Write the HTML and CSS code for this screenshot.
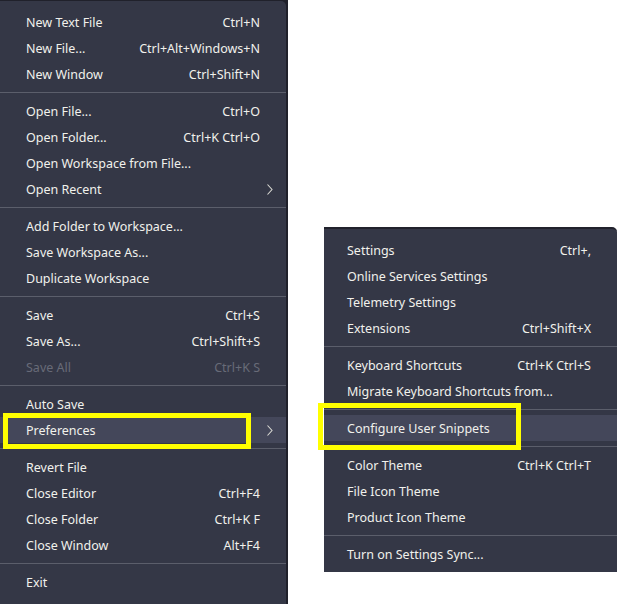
FILE: index.html
```html
<!DOCTYPE html>
<html>
<head>
<meta charset="utf-8">
<link rel="stylesheet" href="styles.css">
</head>
<body>
<div class="stage">
  <div class="left-col">
    <div class="menu menu-main">
      <div class="item"><span class="label">New Text File</span><span class="key">Ctrl+N</span></div>
      <div class="item"><span class="label">New File...</span><span class="key">Ctrl+Alt+Windows+N</span></div>
      <div class="item"><span class="label">New Window</span><span class="key">Ctrl+Shift+N</span></div>
      <div class="sep"></div>
      <div class="item"><span class="label">Open File...</span><span class="key">Ctrl+O</span></div>
      <div class="item"><span class="label">Open Folder...</span><span class="key">Ctrl+K Ctrl+O</span></div>
      <div class="item"><span class="label">Open Workspace from File...</span></div>
      <div class="item has-sub"><span class="label">Open Recent</span><svg class="chev" width="6" height="11" viewBox="0 0 6 11"><path d="M0.5 0.5 L5 5.5 L0.5 10.5" fill="none" stroke="#d8d8d2" stroke-width="1.1"/></svg></div>
      <div class="sep"></div>
      <div class="item"><span class="label">Add Folder to Workspace...</span></div>
      <div class="item"><span class="label">Save Workspace As...</span></div>
      <div class="item"><span class="label">Duplicate Workspace</span></div>
      <div class="sep"></div>
      <div class="item"><span class="label">Save</span><span class="key">Ctrl+S</span></div>
      <div class="item"><span class="label">Save As...</span><span class="key">Ctrl+Shift+S</span></div>
      <div class="item disabled"><span class="label">Save All</span><span class="key">Ctrl+K S</span></div>
      <div class="sep"></div>
      <div class="item"><span class="label">Auto Save</span></div>
      <div class="item has-sub active"><span class="label">Preferences</span><svg class="chev" width="6" height="11" viewBox="0 0 6 11"><path d="M0.5 0.5 L5 5.5 L0.5 10.5" fill="none" stroke="#d8d8d2" stroke-width="1.1"/></svg></div>
      <div class="sep"></div>
      <div class="item"><span class="label">Revert File</span></div>
      <div class="item"><span class="label">Close Editor</span><span class="key">Ctrl+F4</span></div>
      <div class="item"><span class="label">Close Folder</span><span class="key">Ctrl+K F</span></div>
      <div class="item"><span class="label">Close Window</span><span class="key">Alt+F4</span></div>
      <div class="sep"></div>
      <div class="item"><span class="label">Exit</span></div>
    </div>
    <div class="mark mark-left"></div>
  </div>

  <div class="right-col">
    <div class="menu menu-sub">
      <div class="item"><span class="label">Settings</span><span class="key">Ctrl+,</span></div>
      <div class="item"><span class="label">Online Services Settings</span></div>
      <div class="item"><span class="label">Telemetry Settings</span></div>
      <div class="item"><span class="label">Extensions</span><span class="key">Ctrl+Shift+X</span></div>
      <div class="sep"></div>
      <div class="item"><span class="label">Keyboard Shortcuts</span><span class="key">Ctrl+K Ctrl+S</span></div>
      <div class="item"><span class="label">Migrate Keyboard Shortcuts from...</span></div>
      <div class="sep"></div>
      <div class="item active"><span class="label">Configure User Snippets</span></div>
      <div class="sep"></div>
      <div class="item"><span class="label">Color Theme</span><span class="key">Ctrl+K Ctrl+T</span></div>
      <div class="item"><span class="label">File Icon Theme</span></div>
      <div class="item"><span class="label">Product Icon Theme</span></div>
      <div class="sep"></div>
      <div class="item"><span class="label">Turn on Settings Sync...</span></div>
    </div>
    <div class="mark mark-right"></div>
  </div>
</div>
</body>
</html>
```

FILE: styles.css
```css
html, body {
  margin: 0;
  padding: 0;
  background: #ffffff;
}
body {
  width: 618px;
  height: 604px;
  overflow: hidden;
  font-family: "Noto Sans", "Open Sans", sans-serif;
  font-size: 12.5px;
  color: #f1f1ec;
}
.stage {
  display: flex;
  align-items: flex-start;
  gap: 36px;
}
.left-col {
  position: relative;
  width: 288px;
  height: 604px;
  background: #20212b;
}
.menu {
  background: #343746;
  display: flex;
  flex-direction: column;
}
.menu-main {
  width: 286px;
  height: 603px;
  margin-top: 1px;
  padding-top: 8px;
  box-sizing: border-box;
  border-top-right-radius: 5px;
}
.right-col {
  position: relative;
  margin-top: 227px;
  width: 294px;
}
.menu-sub {
  width: 293px;
  border-top: 2px solid #21222c;
  padding: 8px 0 5px;
  border-top-right-radius: 5px;
}
.item {
  height: 26px;
  display: flex;
  align-items: center;
  white-space: nowrap;
}
.menu-main .item {
  padding: 0 26px 0 26px;
}
.menu-sub .item {
  padding: 0 26px 0 23px;
}
.label {
  flex: 1;
}
.item.has-sub {
  padding-right: 13px;
}
.chev {
  display: block;
}
.item.active {
  background: #44475a;
}
.item.disabled {
  color: #686b78;
}
.sep {
  height: 1px;
  margin: 5px 0;
  background: #5b5e6b;
}
.mark {
  position: absolute;
  border: 5px solid #ffff00;
  box-sizing: border-box;
}
.mark-left {
  left: 3px;
  top: 413px;
  width: 248px;
  height: 36px;
}
.mark-right {
  left: -6px;
  top: 176px;
  width: 203px;
  height: 47px;
}
```
